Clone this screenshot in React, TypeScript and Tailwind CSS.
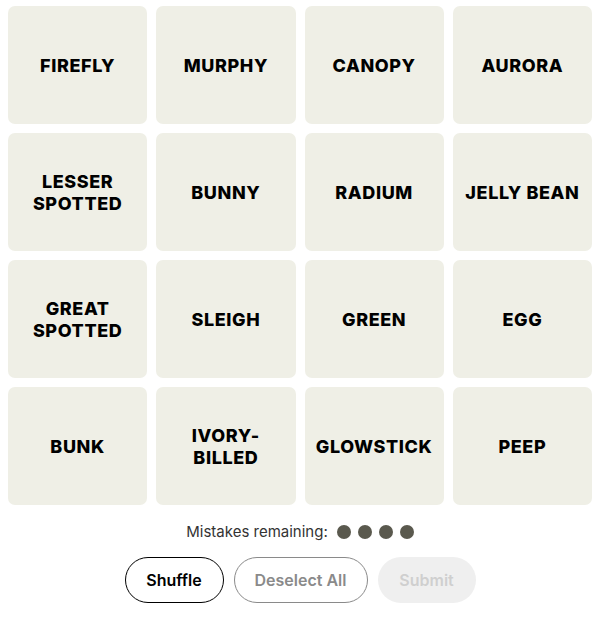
const words = [
  "FIREFLY",
  "MURPHY",
  "CANOPY",
  "AURORA",
  "LESSER SPOTTED",
  "BUNNY",
  "RADIUM",
  "JELLY BEAN",
  "GREAT SPOTTED",
  "SLEIGH",
  "GREEN",
  "EGG",
  "BUNK",
  "IVORY-BILLED",
  "GLOWSTICK",
  "PEEP",
];

export default function App() {
  return (
    <div className="w-[600px] h-[617px] bg-white font-['Inter','Liberation_Sans',sans-serif] text-black">
      <div className="pl-[8px] pt-[6px] w-[592px] grid grid-cols-4 gap-[9px] auto-rows-[118px]">
        {words.map((w) => (
          <div
            key={w}
            className="bg-[#efefe6] rounded-[7px] flex items-center justify-center text-center px-2 pt-[2px]"
          >
            <span className={"font-extrabold text-[18px] leading-[22px] tracking-[0.6px] " + (w.includes(" ") && w !== "JELLY BEAN" ? "max-w-[100px]" : "") + (w === "IVORY-BILLED" ? "max-w-[80px]" : "")}>
              {w}
            </span>
          </div>
        ))}
      </div>

      <div className="flex items-center justify-center gap-[9px] mt-[17px] h-[20px] text-[15px] text-[#333]">
        <span>Mistakes remaining:</span>
        <div className="flex gap-[7px]">
          {[0, 1, 2, 3].map((i) => (
            <span key={i} className="w-[14px] h-[14px] rounded-full bg-[#5a594e]" />
          ))}
        </div>
      </div>

      <div className="flex justify-center gap-[10px] mt-[15px]">
        <button className="w-[99px] h-[46px] rounded-full border-[1.5px] border-black font-semibold text-[16px] bg-white">
          Shuffle
        </button>
        <button className="w-[134px] h-[46px] rounded-full border-[1.5px] border-[#8a8a8a] text-[#8a8a8a] font-semibold text-[16px] bg-white">
          Deselect All
        </button>
        <button className="w-[98px] h-[46px] rounded-full bg-[#efefef] text-[#cfcfcf] font-semibold text-[16px]">
          Submit
        </button>
      </div>
    </div>
  );
}
